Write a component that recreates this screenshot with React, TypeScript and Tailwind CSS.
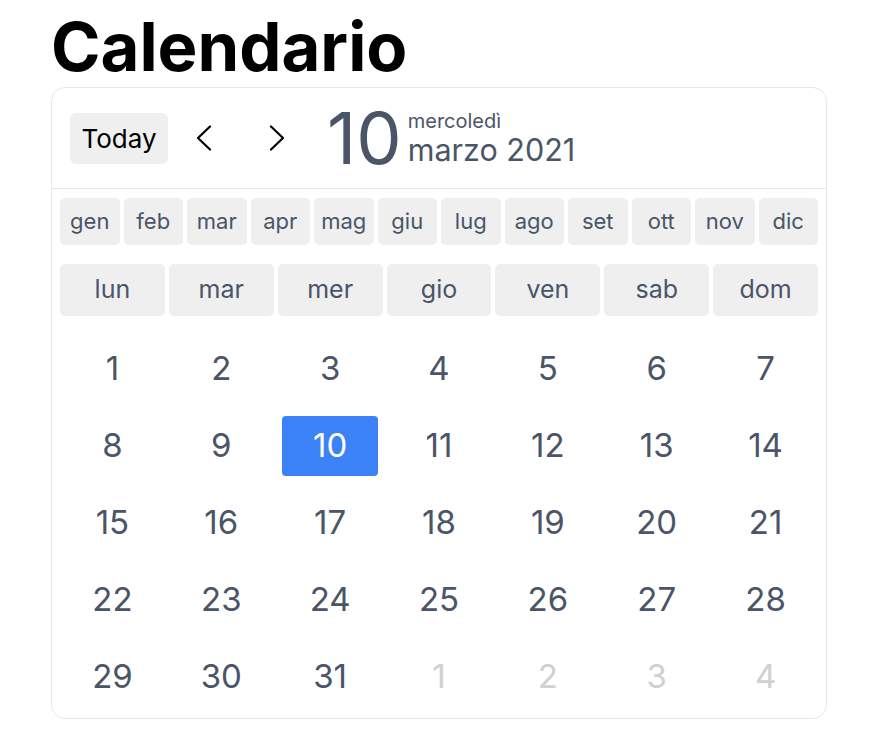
import React from "react";

const MONTHS = ["gen", "feb", "mar", "apr", "mag", "giu", "lug", "ago", "set", "ott", "nov", "dic"];
const WEEKDAYS = ["lun", "mar", "mer", "gio", "ven", "sab", "dom"];

// march 2021 starts on monday, trailing days from april
const DAYS: { n: number; muted?: boolean }[] = [
  ...Array.from({ length: 31 }, (_, i) => ({ n: i + 1 })),
  ...[1, 2, 3, 4].map((n) => ({ n, muted: true })),
];

function Chevron({ dir }: { dir: "left" | "right" }) {
  return (
    <svg width="16" height="26" viewBox="0 0 16 26" fill="none" stroke="#000" strokeWidth="2.2" strokeLinecap="round" strokeLinejoin="round">
      {dir === "left" ? <polyline points="14,1.5 2,13 14,24.5" /> : <polyline points="2,1.5 14,13 2,24.5" />}
    </svg>
  );
}

export default function App() {
  const selected = 10;

  return (
    <div className="min-h-[756px] bg-white pl-[51px] pt-[13px] font-[family-name:Inter,sans-serif]">
      <h1 className="text-[67px] font-bold leading-none text-black">Calendario</h1>

      <div className="mt-[7px] w-[776px] rounded-[14px] border border-[#e2e8f0] bg-white">
        {/* header */}
        <div className="flex h-[101px] items-center border-b border-[#e2e8f0] pl-[18px]">
          <button className="h-[51px] w-[98px] rounded-md bg-[#efefef] text-[26px] text-black">Today</button>
          <button className="ml-[14px] flex h-[44px] w-[44px] items-center justify-center">
            <Chevron dir="left" />
          </button>
          <button className="ml-[29px] flex h-[44px] w-[44px] items-center justify-center">
            <Chevron dir="right" />
          </button>
          <span className="ml-[28px] text-[72px] leading-none text-[#4a5568]">10</span>
          <div className="ml-[6px] flex flex-col gap-[4px] text-[#4a5568]">
            <span className="text-[20px] leading-none">mercoledì</span>
            <span className="text-[30.5px] leading-none">marzo 2021</span>
          </div>
        </div>

        {/* body */}
        <div className="px-[8px] pb-[11px] pt-[9px]">
          <div className="grid grid-cols-12 gap-1">
            {MONTHS.map((m) => (
              <button key={m} className="flex h-[47px] items-center justify-center rounded-[5px] bg-[#efefef] text-[22px] text-[#4a5568]">
                {m}
              </button>
            ))}
          </div>

          <div className="mt-[19px] grid grid-cols-7 gap-1">
            {WEEKDAYS.map((d) => (
              <button key={d} className="flex h-[52px] items-center justify-center rounded-[5px] bg-[#efefef] text-[25px] text-[#4a5568]">
                {d}
              </button>
            ))}
          </div>

          <div className="mt-[23px] grid grid-cols-7 gap-x-1 gap-y-[17px]">
            {DAYS.map((d, i) => {
              const isSel = !d.muted && d.n === selected;
              return (
                <div key={i} className="flex justify-center">
                  <div
                    className={
                      isSel
                        ? "flex h-[60px] w-[96px] items-center justify-center rounded-[4px] bg-[#3b82f6] text-[33px] text-white"
                        : d.muted
                        ? "flex h-[60px] w-[96px] items-center justify-center text-[33px] text-[#d0d0d0]"
                        : "flex h-[60px] w-[96px] items-center justify-center text-[33px] text-[#4a5568]"
                    }
                  >
                    {d.n}
                  </div>
                </div>
              );
            })}
          </div>
        </div>
      </div>
    </div>
  );
}
